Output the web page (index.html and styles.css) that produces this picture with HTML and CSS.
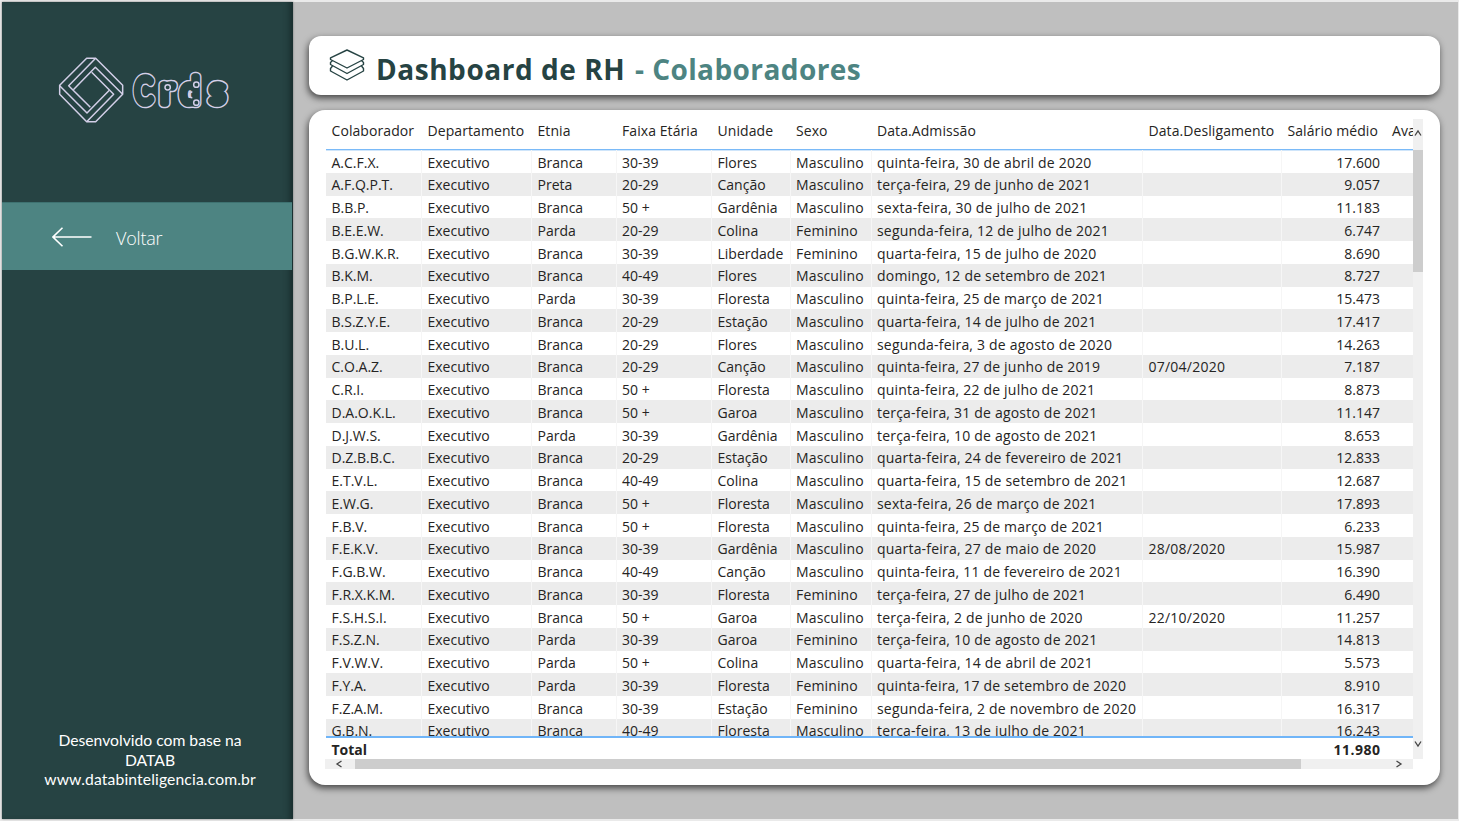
FILE: index.html
```html
<!DOCTYPE html>
<html lang="pt-BR">
<head>
<meta charset="utf-8">
<title>Dashboard de RH - Colaboradores</title>
<link rel="stylesheet" href="styles.css">
</head>
<body>
<div class="page">
  <aside class="sidebar">
    <svg class="logo" viewBox="0 0 630 300" aria-label="Crds">
      <g class="mark">
        <path d="M140 55H167L248 136V163L167 245H140L59 163V136Z"/>
        <path d="M167 55L86 137L151 202"/>
        <path d="M59 137L141 219L208 151"/>
        <path d="M140 245L221 163L155 97"/>
        <path d="M248 163L166 82L100 149"/>
      </g>
      <defs><g id="word"><text transform="translate(285 188) scale(.74 1)">C</text><text y="188" x="362">r</text><text transform="translate(422 188) scale(.95 1)">d</text><text y="188" x="510">s</text></g></defs>
      <use href="#word" class="word-outer"/>
      <use href="#word" class="word-inner"/>
      <g class="mark">
        <circle cx="383" cy="142" r="8"/><circle cx="469" cy="134" r="8"/>
        <circle cx="469" cy="188" r="8"/><path d="M457 155C444 158 444 172 457 173"/>
      </g>
    </svg>
    <nav class="back">
      <svg class="arrow" viewBox="0 0 40 20"><path d="M10.5 .8L1 10L10.5 19.200M1 10H39.500"/></svg>
      <span>Voltar</span>
    </nav>
    <footer class="credit"><span>Desenvolvido com base na</span><span>DATAB</span><span class="site">www.databinteligencia.com.br</span></footer>
  </aside>
  <main class="content">
    <header class="card title-card">
      <svg class="layers" viewBox="0 0 36 33">
        <path d="M18 1L34.500 8.800V10.500L18 19L1.500 10.500V8.800Z"/>
        <path d="M3.500 11.500L1.500 13.500V15.500L18 24.500L34.500 15.500V13.500L32.500 11.500"/>
        <path d="M3.500 17L1.500 19.500V22L18 31L34.500 22V19.500L32.500 17"/>
      </svg>
      <h1><span class="t1">Dashboard de RH</span> <span class="t2">- Colaboradores</span></h1>
    </header>
    <section class="card table-card">
      <div class="frame">
        <div class="table">
          <div class="row head"><span>Colaborador</span><span>Departamento</span><span>Etnia</span><span>Faixa Etária</span><span>Unidade</span><span>Sexo</span><span>Data.Admissão</span><span>Data.Desligamento</span><span>Salário médio</span><span>Ava</span></div>
          <div class="rows" id="rows"></div>
          <div class="total"><span>Total</span><span class="sum">11.980</span></div>
        </div>
        <div class="vbar"><svg class="up" viewBox="0 0 10 8"><path d="M2 6.500L5 2L8 6.500"/></svg><div class="vthumb"></div><svg class="down" viewBox="0 0 10 8"><path d="M2 1.500L5 6L8 1.500"/></svg></div>
        <div class="hbar"><svg class="left" viewBox="0 0 8 10"><path d="M6.500 2L2 5L6.500 8"/></svg><div class="hthumb"></div><svg class="right" viewBox="0 0 8 10"><path d="M1.500 2L6 5L1.500 8"/></svg></div>
      </div>
    </section>
  </main>
</div>
<script src="table.js"></script>
</body>
</html>
```
FILE: styles.css
```css
* { box-sizing: border-box; }
body { margin: 0; background: #eaeaea; font-family: "Open Sans", "Noto Sans", sans-serif; color: #252423; }
.page { width: 1459px; height: 821px; padding: 2px 1px 2px 2px; display: flex; overflow: hidden; }
.sidebar { width: 291px; background: #264343; display: flex; flex-direction: column; color: #fff; box-shadow: inset -7px 0 6px -4px #182c2c, 0 0 2px #777; flex: none; z-index: 1; }
.logo { width: 210px; height: 100px; margin: 38px 0 62px 38px; flex: none; }
.mark, .arrow, .layers, .vbar svg, .hbar svg { fill: none; }
.mark { stroke: #d3cfe8; stroke-width: 4.500; stroke-linejoin: round; }
#word { font-family: Lato, sans-serif; font-size: 105px; font-weight: 300; }
.word-outer { stroke: #d3cfe8; stroke-width: 32; stroke-linejoin: round; }
.word-inner { stroke: #264343; fill: #264343; stroke-width: 23; stroke-linejoin: round; }
.back { width: 290px; height: 68px; background: #4d8482; border-top: 1px solid #3e7271; display: flex; align-items: center; padding-left: 50px; gap: 24px; font-size: 18px; font-weight: 300; letter-spacing: -.2px; }
.back span { padding-top: 2px; }
.arrow { width: 40px; height: 20px; stroke: #fff; stroke-width: 1.600; }
.credit { margin-top: auto; height: 88px; display: flex; flex-direction: column; align-items: center; font: 15.700px/19.500px Lato, sans-serif; margin-left: 5px; }
.site { letter-spacing: .13px; }
.content { flex: 1; background: #bfbfbf; padding: 34px 18px 34px 16px; display: flex; flex-direction: column; gap: 15px; }
.card { background: #fff; box-shadow: -1px 3px 7px rgba(0,0,0,.65); }
.title-card { height: 59px; border-radius: 12px; display: flex; padding: 13px 0 0 20px; gap: 11px; }
.layers { width: 36px; height: 33px; stroke: #264343; stroke-width: 1.400; stroke-linejoin: round; }
h1 { margin: 0; font-size: 28px; line-height: 40px; white-space: nowrap; letter-spacing: .54px; }
.t1 { color: #264343; }
.t2 { color: #4d8482; margin-left: 2px; letter-spacing: .42px; }
.table-card { height: 675px; border-radius: 16px; padding: 9px 16px; }
.frame { width: 1098px; height: 650px; display: grid; grid-template: 640px 10px / 1088px 10px; }
.table { padding-left: 1px; overflow: hidden; min-width: 0; }
.row { display: grid; grid-template-columns: 96px 110px 84.500px 95.500px 78.500px 81px 271.500px 139px 104.500px 27px; width: 1087.500px; height: 22.750px; line-height: 24.500px; font-size: 14px; white-space: nowrap; }
.row span { padding-left: 5.500px; border-right: 1px solid #f6f6f6; }
.rows .row span { padding-top: .55px; height: 22.750px; }
.row span:nth-child(n+9) { border-right: 0; }
.row:not(.head) span:nth-child(9) { text-align: right; padding-right: 6.500px; }
.row span:nth-child(6) { letter-spacing: .15px; }
.row span:nth-child(7) { letter-spacing: .2px; }
.row span:nth-child(8) { letter-spacing: .24px; }
.row.head { height: 31px; line-height: 24px; border-bottom: 1px solid #7abaf8; }
.row.head span { border-right: 0; letter-spacing: .08px; }
.rows { height: 586px; overflow: hidden; box-shadow: inset 0 1px #cfe5fa; }
.rows .row:nth-child(even) { background: #ececec; }
.total { height: 23px; border-top: 2px solid #70b5f8; display: flex; justify-content: space-between; padding: 0 32.500px 0 5.500px; font-size: 14px; font-weight: 700; line-height: 23.500px; }
.sum { letter-spacing: .5px; }
.vbar, .hbar { background: #f0f0f0; }
.vbar { display: flex; flex-direction: column; }
.vbar svg, .hbar svg { stroke: #444; stroke-width: 1.300; flex: none; }
.up, .down { width: 10px; height: 8px; }
.up { margin: 10px 0 12.500px; }
.vthumb { height: 122.500px; background: #cdcdcd; }
.down { margin-top: auto; margin-bottom: 11px; }
.hbar { display: flex; align-items: center; }
.left, .right { width: 8px; height: 10px; }
.left { margin: 0 12px 0 10px; }
.hthumb { width: 946px; height: 10px; background: #cdcdcd; }
.right { margin-left: auto; margin-right: 10px; }
```
FILE: table.js
```js
const data = `A.C.F.X.|Branca|30-39|Flores|M|quinta-feira, 30 de abril de 2020||17.600
A.F.Q.P.T.|Preta|20-29|Canção|M|terça-feira, 29 de junho de 2021||9.057
B.B.P.|Branca|50 +|Gardênia|M|sexta-feira, 30 de julho de 2021||11.183
B.E.E.W.|Parda|20-29|Colina|F|segunda-feira, 12 de julho de 2021||6.747
B.G.W.K.R.|Branca|30-39|Liberdade|F|quarta-feira, 15 de julho de 2020||8.690
B.K.M.|Branca|40-49|Flores|M|domingo, 12 de setembro de 2021||8.727
B.P.L.E.|Parda|30-39|Floresta|M|quinta-feira, 25 de março de 2021||15.473
B.S.Z.Y.E.|Branca|20-29|Estação|M|quarta-feira, 14 de julho de 2021||17.417
B.U.L.|Branca|20-29|Flores|M|segunda-feira, 3 de agosto de 2020||14.263
C.O.A.Z.|Branca|20-29|Canção|M|quinta-feira, 27 de junho de 2019|07/04/2020|7.187
C.R.I.|Branca|50 +|Floresta|M|quinta-feira, 22 de julho de 2021||8.873
D.A.O.K.L.|Branca|50 +|Garoa|M|terça-feira, 31 de agosto de 2021||11.147
D.J.W.S.|Parda|30-39|Gardênia|M|terça-feira, 10 de agosto de 2021||8.653
D.Z.B.B.C.|Branca|20-29|Estação|M|quarta-feira, 24 de fevereiro de 2021||12.833
E.T.V.L.|Branca|40-49|Colina|M|quarta-feira, 15 de setembro de 2021||12.687
E.W.G.|Branca|50 +|Floresta|M|sexta-feira, 26 de março de 2021||17.893
F.B.V.|Branca|50 +|Floresta|M|quinta-feira, 25 de março de 2021||6.233
F.E.K.V.|Branca|30-39|Gardênia|M|quarta-feira, 27 de maio de 2020|28/08/2020|15.987
F.G.B.W.|Branca|40-49|Canção|M|quinta-feira, 11 de fevereiro de 2021||16.390
F.R.X.K.M.|Branca|30-39|Floresta|F|terça-feira, 27 de julho de 2021||6.490
F.S.H.S.I.|Branca|50 +|Garoa|M|terça-feira, 2 de junho de 2020|22/10/2020|11.257
F.S.Z.N.|Parda|30-39|Garoa|F|terça-feira, 10 de agosto de 2021||14.813
F.V.W.V.|Parda|50 +|Colina|M|quarta-feira, 14 de abril de 2021||5.573
F.Y.A.|Parda|30-39|Floresta|F|quinta-feira, 17 de setembro de 2020||8.910
F.Z.A.M.|Branca|30-39|Estação|F|segunda-feira, 2 de novembro de 2020||16.317
G.B.N.|Branca|40-49|Floresta|M|terça-feira, 13 de julho de 2021||16.243`;
const sex = { M: "Masculino", F: "Feminino" };
const rows = document.getElementById("rows");
for (const line of data.split("\n")) {
  const [name, race, age, unit, s, hired, left, pay] = line.split("|");
  const row = document.createElement("div");
  row.className = "row";
  for (const value of [name, "Executivo", race, age, unit, sex[s], hired, left, pay, ""]) {
    const cell = document.createElement("span");
    cell.textContent = value;
    row.append(cell);
  }
  rows.append(row);
}
```
